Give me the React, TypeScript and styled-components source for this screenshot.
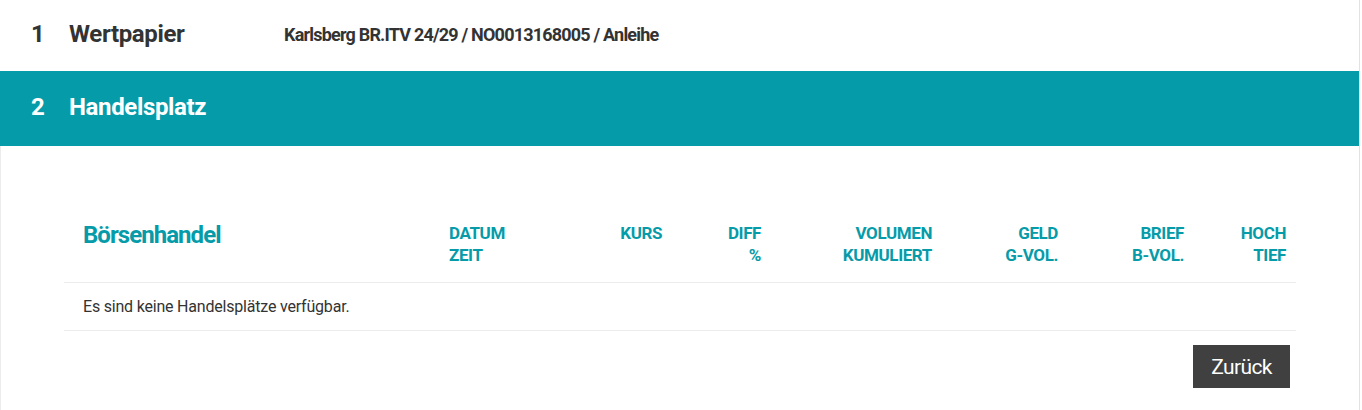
import React from "react";
import styled, { createGlobalStyle } from "styled-components";

const Global = createGlobalStyle`
  html, body { margin: 0; padding: 0; background: #fff; }
  body { font-family: Roboto, "Liberation Sans", sans-serif; color: #333; }
  * { box-sizing: border-box; }
`;

const Page = styled.div`
  width: 1360px;
  min-height: 410px;
  border-right: 1px solid #e2e2e2;
  border-left: 1px solid #ececec;
`;

const StepRow = styled.div<{ $active?: boolean }>`
  display: flex;
  align-items: center;
  height: ${(p) => (p.$active ? "75px" : "71px")};
  padding: 0 0 4px 31px;
  background: ${(p) => (p.$active ? "#069ba8" : "#fff")};
  color: ${(p) => (p.$active ? "#fff" : "#333")};
  margin-left: -1px;
`;

const StepNum = styled.span`
  width: 38px;
  font-size: 24px;
  font-weight: 700;
  letter-spacing: -0.4px;
`;

const StepTitle = styled.span`
  width: 215px;
  font-size: 24px;
  font-weight: 700;
  letter-spacing: -0.35px;
`;

const StepInfo = styled.span`
  font-size: 18px;
  font-weight: 700;
  letter-spacing: -0.8px;
  padding-top: 2px;
`;

const Section = styled.div`
  padding: 76px 63px 22px 63px;
`;

const Grid = styled.div`
  display: grid;
  grid-template-columns: 375px 121px 112px 99px 171px 126px 126px 102px;
`;

const HeadRow = styled(Grid)`
  align-items: start;
  padding-bottom: 16px;
  border-bottom: 1px solid #ececec;
`;

const Title = styled.div`
  padding-left: 19px;
  font-size: 24px;
  line-height: 26px;
  font-weight: 700;
  color: #069ba8;
  letter-spacing: -0.95px;
`;

const HeadCell = styled.div<{ $left?: boolean }>`
  padding: 0 10px;
  text-align: ${(p) => (p.$left ? "left" : "right")};
  font-size: 17px;
  line-height: 22px;
  font-weight: 700;
  color: #069ba8;
  letter-spacing: -0.4px;
  text-transform: uppercase;
  white-space: nowrap;
`;

const BodyRow = styled.div`
  height: 48px;
  display: flex;
  align-items: center;
  padding-left: 19px;
  border-bottom: 1px solid #ececec;
  font-size: 16px;
  color: #333;
  letter-spacing: -0.2px;
`;

const Actions = styled.div`
  display: flex;
  justify-content: flex-end;
  padding: 14px 6px 0 0;
`;

const Button = styled.button`
  width: 97px;
  height: 43px;
  border: none;
  border-radius: 0;
  background: #404040;
  color: #fff;
  font-family: Roboto, "Liberation Sans", sans-serif;
  font-size: 21px;
  letter-spacing: -0.6px;
  cursor: pointer;
`;

const columns: { label: string[]; left?: boolean }[] = [
  { label: ["Datum", "Zeit"], left: true },
  { label: ["Kurs"] },
  { label: ["Diff", "%"] },
  { label: ["Volumen", "kumuliert"] },
  { label: ["Geld", "G-Vol."] },
  { label: ["Brief", "B-Vol."] },
  { label: ["Hoch", "Tief"] },
];

export default function App() {
  return (
    <>
      <Global />
      <Page>
        <StepRow>
          <StepNum>1</StepNum>
          <StepTitle>Wertpapier</StepTitle>
          <StepInfo>Karlsberg BR.ITV 24/29 / NO0013168005 / Anleihe</StepInfo>
        </StepRow>
        <StepRow $active>
          <StepNum>2</StepNum>
          <StepTitle>Handelsplatz</StepTitle>
        </StepRow>
        <Section>
          <HeadRow>
            <Title>Börsenhandel</Title>
            {columns.map((c) => (
              <HeadCell key={c.label[0]} $left={c.left}>
                {c.label.map((l, i) => (
                  <div key={i}>{l}</div>
                ))}
              </HeadCell>
            ))}
          </HeadRow>
          <BodyRow>Es sind keine Handelsplätze verfügbar.</BodyRow>
          <Actions>
            <Button>Zurück</Button>
          </Actions>
        </Section>
      </Page>
    </>
  );
}
